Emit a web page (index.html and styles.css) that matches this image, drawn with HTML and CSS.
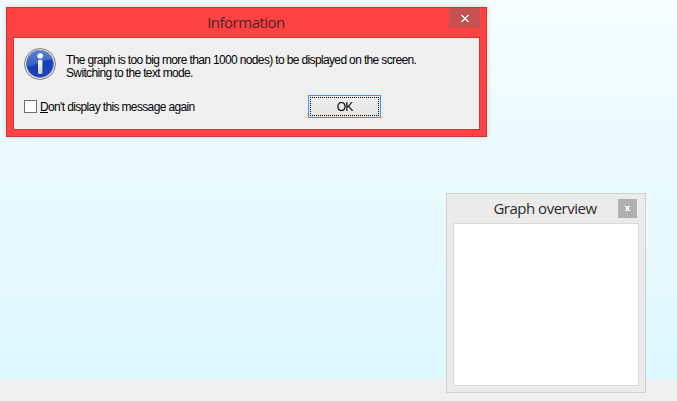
FILE: index.html
```html
<!DOCTYPE html>
<html lang="en">
<head>
<meta charset="utf-8">
<title>Information</title>
<link rel="stylesheet" href="styles.css">
</head>
<body>
<main class="workspace"></main>
<footer class="statusbar"></footer>

<section class="window dialog" role="dialog">
  <header class="titlebar">
    <h1 class="title">Information</h1>
    <button class="close" aria-label="Close">
      <svg width="8" height="7" viewBox="0 0 8 7" shape-rendering="crispEdges"><path fill="#fff" d="M0 0h2v1h1v1h2V1h1V0h2v1H7v1H6v1H5v1h1v1h1v1h1v1H6V6H5V5H3v1H2v1H0V6h1V5h1V4h1V3H2V2H1V1H0z"/></svg>
    </button>
  </header>
  <div class="client">
    <div class="message">
      <svg class="info" width="32" height="32" viewBox="0 0 32 32">
        <defs>
          <linearGradient id="ball" x1="0" y1="0" x2="1" y2="1"><stop offset="0" stop-color="#1740a8"/><stop offset=".5" stop-color="#173db4"/><stop offset="1" stop-color="#1c45d0"/></linearGradient>
          <linearGradient id="gloss" x1="0" y1="0" x2="0" y2="1"><stop offset="0" stop-color="#6f92dc"/><stop offset="1" stop-color="#3b64c9"/></linearGradient>
          <linearGradient id="stem" x1="0" y1="0" x2="0" y2="1"><stop offset="0" stop-color="#fff"/><stop offset="1" stop-color="#c9c9c9"/></linearGradient>
        </defs>
        <circle cx="16" cy="16" r="15.500" fill="#e8e8e8" stroke="#808080" stroke-width="1"/>
        <circle cx="16" cy="16" r="13.500" fill="url(#ball)" stroke="#77809a" stroke-width=".8"/>
        <path d="M3 18A13 13 0 0 1 28.300 11.500Q18 12 13 15.500T3 18Z" fill="url(#gloss)" opacity=".8"/>
        <circle cx="16.200" cy="8" r="2.800" fill="#fff"/>
        <rect x="14" y="12" width="4.400" height="14" rx="1" fill="url(#stem)"/>
      </svg>
      <p class="text">The graph is too big more than 1000 nodes) to be displayed on the screen.<br>Switching to the text mode.</p>
    </div>
    <div class="actions">
      <label class="option"><span class="box"></span><span class="caption"><u>D</u>on't display this message again</span></label>
      <button class="ok"><span class="focus">OK</span></button>
    </div>
  </div>
</section>

<section class="window overview">
  <header class="titlebar">
    <h2 class="title">Graph overview</h2>
    <button class="close" aria-label="Close">
      <svg width="5" height="5" viewBox="0 0 5 5" shape-rendering="crispEdges"><path fill="#fff" d="M0 0h2v1h1V0h2v1H4v3h1v1H3V4H2v1H0V4h1V1H0z"/></svg>
    </button>
  </header>
  <div class="client"></div>
</section>
</body>
</html>
```
FILE: styles.css
```css
* { box-sizing: border-box; }

body {
  margin: 0;
  height: 401px;
  overflow: hidden;
  display: flex;
  flex-direction: column;
  font: 12px/13px "Liberation Sans", sans-serif;
  color: #000;
}

.workspace {
  flex: 1;
  background: linear-gradient(to bottom, #f5fdff, #def8ff);
}

.statusbar { height: 22px; background: #f0f0f0; }

.window {
  position: absolute;
  display: flex;
  flex-direction: column;
  border: 1px solid;
  padding: 0 6px 6px;
}

.titlebar { display: flex; flex: none; }

.title {
  flex: 1;
  margin: 0;
  text-align: center;
  white-space: nowrap;
  font: 15px/20px "Open Sans", sans-serif;
  letter-spacing: -.5px;
}

.close {
  display: flex;
  align-items: center;
  justify-content: center;
  border: 0;
  padding: 0;
}

.client { flex: 1; border: 1px solid; }

.dialog {
  left: 6px;
  top: 7px;
  width: 481px;
  height: 130px;
  background: #ff4343;
  border-color: #c83838;
  box-shadow: 0 0 5px rgba(0, 40, 60, .2);
}

.dialog .titlebar { height: 29px; }
.dialog .title { padding: 4px 0 0 30px; color: #4b2528; }
.dialog .close { width: 31px; height: 20px; background: #c75050; }
.dialog .client {
  border-color: #c83838;
  background: #f0f0f0;
  padding: 10px;
}

.message { display: flex; gap: 10px; height: 47px; }
.info { flex: none; }
.text { margin: 6px 0 0; white-space: nowrap; letter-spacing: -.64px; }

.actions { display: flex; height: 23px; }
.option { display: flex; align-items: center; gap: 3px; width: 284px; white-space: nowrap; }
.box { width: 13px; height: 13px; border: 1px solid #707070; background: #fff; }
.caption { padding-top: 1px; letter-spacing: -.64px; }

.ok {
  width: 73px;
  height: 23px;
  padding: 1px;
  border: 1px solid #3399ff;
  background: linear-gradient(#f0f0f0, #e5e5e5);
  font: 12px/18px "Liberation Sans", sans-serif;
  letter-spacing: -.8px;
  color: #000;
}
.focus { display: block; height: 19px; border: 1px dotted #000; }

.overview {
  left: 446px;
  top: 193px;
  width: 200px;
  height: 200px;
  background: #ebebeb;
  border-color: #d0d0d0;
}
.overview .titlebar { height: 29px; padding: 5px 2px 0 0; }
.overview .title { margin-top: -1px; padding-left: 19px; color: #2b2b2b; }
.overview .close { width: 19px; height: 19px; background: #b0b0b0; }
.overview .client { background: #fff; border-color: #d9d9d9; }
```
